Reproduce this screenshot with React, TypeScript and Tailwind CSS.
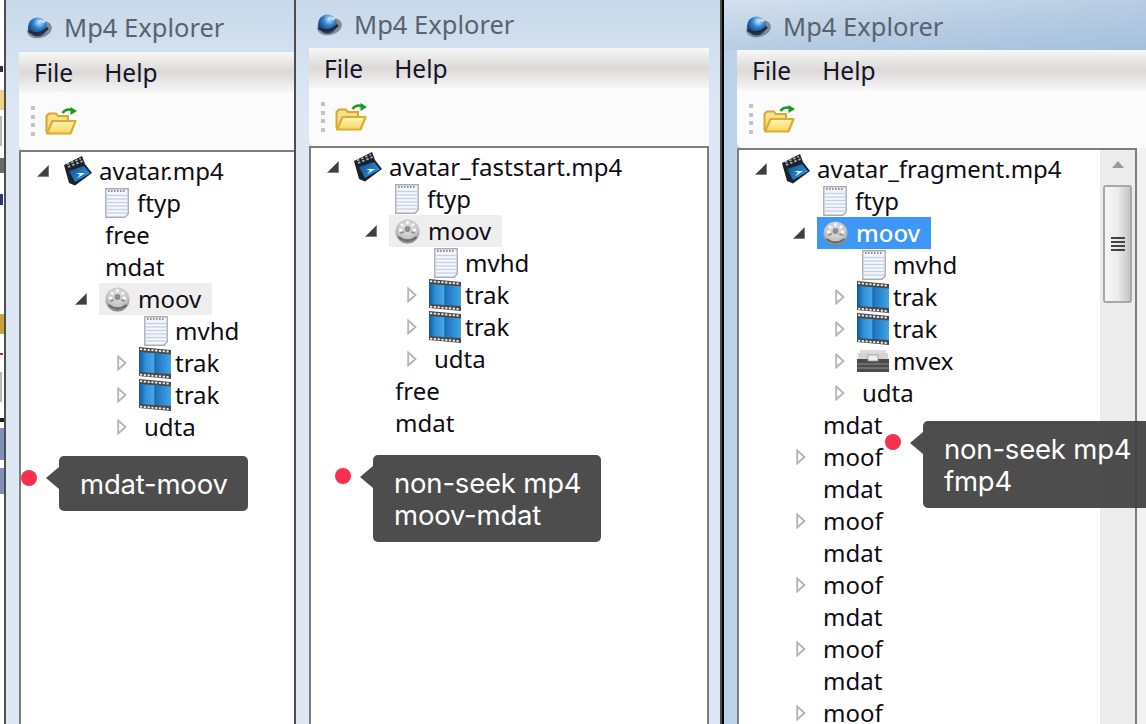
import React from "react";

const Open = () => (
  <svg width="14" height="14" viewBox="0 0 14 14" className="block">
    <path d="M12.5 1.5V12.5H1.5Z" fill="#3f3f3f" stroke="#777" strokeWidth="0.8" />
  </svg>
);
const Closed = () => (
  <svg width="10" height="16" viewBox="0 0 10 16" className="block">
    <path d="M1.2 1.5L8.5 8L1.2 14.5Z" fill="#fff" stroke="#b4b4b4" strokeWidth="1.8" />
  </svg>
);
const Doc = () => (
  <svg width="24" height="30" viewBox="0 0 24 30" className="block shrink-0">
    <path d="M0.8 0.8H23.2V26L20 29.2H0.8Z" fill="#f4f6fb" stroke="#a9adb3" strokeWidth="1.4" />
    <path d="M3 3H21" stroke="#8d9198" strokeWidth="1.8" strokeDasharray="1.6 1.4" />
    {[7.5, 11, 14.5, 18, 21.5, 25].map((y) => (
      <path key={y} d={`M2 ${y}H22`} stroke="#c3cfe2" strokeWidth="1.2" />
    ))}
  </svg>
);
const Film = () => (
  <svg width="32" height="32" viewBox="0 0 32 32" className="block shrink-0 -ml-[5px]">
    <defs>
      <linearGradient id="filmBlue" x1="0" x2="1" y1="0" y2="0">
        <stop offset="0" stopColor="#0e5a9f" />
        <stop offset="0.2" stopColor="#2f8fd8" />
        <stop offset="0.48" stopColor="#4aa8e8" />
        <stop offset="0.52" stopColor="#1c74bd" />
        <stop offset="0.8" stopColor="#2f90d8" />
        <stop offset="1" stopColor="#46a5e6" />
      </linearGradient>
    </defs>
    <path d="M0 0L32 3V32L0 29Z" fill="#4a4a4a" />
    <path d="M1 2.2L31 4.8" stroke="#f2f2f2" strokeWidth="1.8" strokeDasharray="2.2 1.6" />
    <path d="M1 27.6L31 30.2" stroke="#f2f2f2" strokeWidth="1.8" strokeDasharray="2.2 1.6" />
    <path d="M0 5L32 7.5V27L0 25Z" fill="url(#filmBlue)" />
    <path d="M16 6.5V26" stroke="#0f5c9c" strokeWidth="1" />
  </svg>
);
const Gear = () => (
  <svg width="25" height="25" viewBox="0 0 25 25" className="block shrink-0 blur-[0.5px]">
    <defs>
      <radialGradient id="gearG" cx="0.5" cy="0.35" r="0.65">
        <stop offset="0" stopColor="#e4e4e4" />
        <stop offset="0.7" stopColor="#c2c2c2" />
        <stop offset="1" stopColor="#7e7e7e" />
      </radialGradient>
    </defs>
    <circle cx="12.5" cy="12.5" r="12" fill="url(#gearG)" />
    <circle cx="12.5" cy="10" r="3" fill="#8c8c8c" />
    <path d="M6 5L8 7M19 5L17 7M4 11H7M21 11H18M12.5 2V5" stroke="#fbfbfb" strokeWidth="2.4" />
    <path d="M5 14L9 13M20 14L16 13" stroke="#8d8d8d" strokeWidth="1.6" />
    <path d="M3.5 18Q12.5 25 21.5 18" stroke="#6b6b6b" strokeWidth="2.2" fill="none" />
  </svg>
);
const Clapper = () => (
  <svg width="30" height="30" viewBox="0 0 30 30" className="block shrink-0 blur-[0.3px]">
    <defs>
      <linearGradient id="clapBlue" x1="0" x2="1" y1="0" y2="0.6">
        <stop offset="0" stopColor="#0e4c8a" />
        <stop offset="1" stopColor="#2f93da" />
      </linearGradient>
    </defs>
    <path d="M1 9L19 0L22 8L29 17L12 29.5L6 27Z" fill="#1b222c" />
    <path d="M4 8.5L18 2.5M5 11L19.5 5" stroke="#aab1ba" strokeWidth="1.8" strokeDasharray="2.5 2" />
    <path d="M6 15L21 10L27 17.5L12 26Z" fill="url(#clapBlue)" />
    <path d="M13 17L22 17L14 22.5L17 18.5Z" fill="#eaf5ff" />
  </svg>
);
const Box = () => (
  <svg width="32" height="24" viewBox="0 0 32 24" className="block shrink-0 -ml-[5px]">
    <rect x="3" y="1" width="26" height="3" fill="#dcdcdc" />
    <rect x="1" y="4" width="30" height="7" fill="#d4d4d4" />
    <rect x="0" y="10" width="32" height="13" fill="#4b4b4b" />
    <path d="M0 15H32M0 19H32" stroke="#7a7a7a" strokeWidth="1.4" />
    <rect x="11" y="6" width="10" height="6" fill="#efefef" stroke="#9a9a9a" strokeWidth="0.8" />
  </svg>
);
const Globe = () => (
  <svg width="26" height="22" viewBox="0 0 26 22" className="block blur-[0.5px]">
    <defs>
      <radialGradient id="globeG" cx="0.6" cy="0.25" r="0.7">
        <stop offset="0" stopColor="#cfe8fb" />
        <stop offset="0.45" stopColor="#2f86d2" />
        <stop offset="1" stopColor="#16366e" />
      </radialGradient>
    </defs>
    <ellipse cx="13.5" cy="12.5" rx="12.5" ry="8.5" fill="#70757f" opacity="0.8" transform="rotate(-14 13.5 12.5)" />
    <circle cx="11.5" cy="10" r="9.5" fill="url(#globeG)" />
    <path d="M2.5 14Q12 20 22 11" stroke="#232a38" strokeWidth="2.6" fill="none" />
    <path d="M13 3L20 3.5L18 6.5Z" fill="#e6f2fb" opacity="0.8" />
  </svg>
);
const Folder = () => (
  <svg width="32" height="28" viewBox="0 0 32 28" className="block">
    <defs>
      <linearGradient id="folderG" x1="0" x2="0" y1="0" y2="1">
        <stop offset="0" stopColor="#fff5b8" />
        <stop offset="1" stopColor="#f8d65e" />
      </linearGradient>
    </defs>
    <path d="M1.5 25V9L4 6.5H11L13 9H23V13" fill="#f8de88" stroke="#d6a92c" strokeWidth="2" />
    <path d="M2 26.5L7.5 14H30.5L25.5 26.5Z" fill="url(#folderG)" stroke="#d9ad30" strokeWidth="2.2" strokeLinejoin="round" />
    <path d="M17.5 6Q21 1 27 3" stroke="#1f9a23" strokeWidth="2.4" fill="none" />
    <path d="M25.5 0L32 4L25.5 8Z" fill="#179a1e" />
  </svg>
);

type Kind = "doc" | "film" | "gear" | "clap" | "box" | "none";
const icons: Record<Kind, React.ReactNode> = {
  doc: <Doc />,
  film: <Film />,
  gear: <Gear />,
  clap: <Clapper />,
  box: <Box />,
  none: null,
};

type RowData = { level: 0 | 1 | 2; label: string; icon: Kind; arrow?: "open" | "closed"; hi?: "soft" | "blue" };

function Row({ level, label, icon, arrow, hi }: RowData) {
  const pad = level === 0 ? "pl-[15px]" : level === 1 ? "pl-[53px]" : "pl-[92px]";
  const slot = level === 0 ? "w-[27px]" : level === 1 ? "w-[25px]" : "w-[31px]";
  const body = level === 1 ? (hi ? "pl-[6px] pr-[11px]" : "px-[6px]") : "";
  const gap = level === 0 ? "gap-[6px]" : level === 1 ? "gap-[8px]" : icon === "doc" ? "gap-[7px]" : "gap-[4px]";
  const bg = hi === "soft" ? "bg-[#eeeeee] text-[#100c14]" : hi === "blue" ? "bg-[#3c97f7] text-white font-medium" : "text-[#100c14]";
  return (
    <div className={`flex h-8 items-center ${pad}`}>
      <div className={`flex items-center shrink-0 ${slot} ${arrow === "closed" ? "pl-[4px]" : ""}`}>
        {arrow === "open" && <Open />}
        {arrow === "closed" && <Closed />}
      </div>
      <div className={`flex h-8 items-center ${gap} ${body} ${bg}`}>
        {icons[icon]}
        <span className="leading-8">{label}</span>
      </div>
    </div>
  );
}

function Chrome({ title, tree, titleCls }: { title: string; tree: React.ReactNode; titleCls: string }) {
  return (
    <>
      <div className={`flex items-center gap-[12px] -ml-[13px] shrink-0 ${titleCls}`}>
        <Globe />
        <span className="text-[25.5px] leading-none text-[#59636f]">{title}</span>
      </div>
      <div className="h-10 shrink-0 flex items-center gap-[31px] pl-[15px] pt-[2px] text-[24.5px] text-[#14142a] bg-gradient-to-b from-[#f7f7f7] via-[#dcd9d7] to-[#f6f6f6]">
        <span>File</span>
        <span>Help</span>
      </div>
      <div className="h-[58px] shrink-0 flex items-center gap-[10px] pl-[12px] bg-[#fbfbfb] rounded-bl-md">
        <div className="flex flex-col gap-[4.6px]">
          <div className="h-[4px] w-[4px] bg-[#c4c4c4]" />
          <div className="h-[4px] w-[4px] bg-[#c4c4c4]" />
          <div className="h-[4px] w-[4px] bg-[#c4c4c4]" />
          <div className="h-[4px] w-[4px] bg-[#c4c4c4]" />
        </div>
        <Folder />
      </div>
      {tree}
    </>
  );
}

function Bubble({ lines, className }: { lines: string[]; className: string }) {
  return (
    <div className={`absolute ${className} rounded-[5px] bg-[rgba(62,62,62,0.92)] pl-[21px] py-[12px] text-[27.5px] leading-[32px] text-white [font-family:Inter,'Liberation_Sans',sans-serif]`}>
      <div className="absolute -left-[13px] top-[11px] h-0 w-0 border-y-[11px] border-r-[13px] border-y-transparent border-r-[rgba(62,62,62,0.92)]" />
      {lines.map((l) => (
        <div key={l} className="whitespace-nowrap tracking-[-0.2px]">{l}</div>
      ))}
    </div>
  );
}

const Dot = ({ className }: { className: string }) => (
  <div className={`absolute ${className} h-4 w-4 rounded-full bg-[#f7304c]`} />
);

const Flecks = () => (
  <div className="w-[4px] shrink-0 flex flex-col">
    <div className="h-[66px]" />
    <div className="h-[6px] w-[3px] bg-[#3b2a5a]" />
    <div className="h-[18px]" />
    <div className="h-[20px] bg-[#efd28a]" />
    <div className="h-[6px]" />
    <div className="h-[30px] w-[2px] bg-[#b9b9b9]" />
    <div className="h-[12px]" />
    <div className="h-[15px] bg-[#6a6a6a]" />
    <div className="h-[21px]" />
    <div className="h-[11px] w-[3px] bg-[#2c3a70]" />
    <div className="h-[109px]" />
    <div className="h-[20px] bg-[#c9a23c]" />
    <div className="h-[19px]" />
    <div className="h-[2px] w-[3px] bg-[#a03040]" />
    <div className="h-[17px]" />
    <div className="h-[30px] w-[2px] bg-[#b9b9b9]" />
    <div className="h-[16px]" />
    <div className="h-[4px] bg-[#222222]" />
    <div className="h-[6px]" />
    <div className="h-[32px] bg-[#8090b8]" />
    <div className="h-[8px]" />
    <div className="h-[26px] bg-[#8090b8]" />
  </div>
);

const tree1: RowData[] = [
  { level: 0, label: "avatar.mp4", icon: "clap", arrow: "open" },
  { level: 1, label: "ftyp", icon: "doc" },
  { level: 1, label: "free", icon: "none" },
  { level: 1, label: "mdat", icon: "none" },
  { level: 1, label: "moov", icon: "gear", arrow: "open", hi: "soft" },
  { level: 2, label: "mvhd", icon: "doc" },
  { level: 2, label: "trak", icon: "film", arrow: "closed" },
  { level: 2, label: "trak", icon: "film", arrow: "closed" },
  { level: 2, label: "udta", icon: "none", arrow: "closed" },
];
const tree2: RowData[] = [
  { level: 0, label: "avatar_faststart.mp4", icon: "clap", arrow: "open" },
  { level: 1, label: "ftyp", icon: "doc" },
  { level: 1, label: "moov", icon: "gear", arrow: "open", hi: "soft" },
  { level: 2, label: "mvhd", icon: "doc" },
  { level: 2, label: "trak", icon: "film", arrow: "closed" },
  { level: 2, label: "trak", icon: "film", arrow: "closed" },
  { level: 2, label: "udta", icon: "none", arrow: "closed" },
  { level: 1, label: "free", icon: "none" },
  { level: 1, label: "mdat", icon: "none" },
];
const tree3: RowData[] = [
  { level: 0, label: "avatar_fragment.mp4", icon: "clap", arrow: "open" },
  { level: 1, label: "ftyp", icon: "doc" },
  { level: 1, label: "moov", icon: "gear", arrow: "open", hi: "blue" },
  { level: 2, label: "mvhd", icon: "doc" },
  { level: 2, label: "trak", icon: "film", arrow: "closed" },
  { level: 2, label: "trak", icon: "film", arrow: "closed" },
  { level: 2, label: "mvex", icon: "box", arrow: "closed" },
  { level: 2, label: "udta", icon: "none", arrow: "closed" },
  { level: 1, label: "mdat", icon: "none" },
  { level: 1, label: "moof", icon: "none", arrow: "closed" },
  { level: 1, label: "mdat", icon: "none" },
  { level: 1, label: "moof", icon: "none", arrow: "closed" },
  { level: 1, label: "mdat", icon: "none" },
  { level: 1, label: "moof", icon: "none", arrow: "closed" },
  { level: 1, label: "mdat", icon: "none" },
  { level: 1, label: "moof", icon: "none", arrow: "closed" },
  { level: 1, label: "mdat", icon: "none" },
  { level: 1, label: "moof", icon: "none", arrow: "closed" },
];

const Rows = ({ rows }: { rows: RowData[] }) => (
  <div className="flex-1 min-w-0 pt-[3px] overflow-hidden">
    {rows.map((r, i) => (
      <Row key={i} {...r} />
    ))}
  </div>
);

export default function App() {
  return (
    <div className="flex h-[724px] w-[1146px] overflow-hidden bg-white text-[24px] [font-family:'Noto_Sans','Open_Sans',sans-serif]">
      <div className="relative flex w-[296px] shrink-0">
        <Flecks />
        <div className="flex min-w-0 flex-1 h-full flex-col border-x-[2px] border-[#4d4d4d] pl-[13px] bg-gradient-to-b from-[#c9d9ea] to-[#dde8f4] to-[15%]">
          <Chrome
            title="Mp4 Explorer"
            titleCls="h-[52px] pt-[3px] pl-[20px]"
            tree={
              <div className="flex-1 min-h-0 bg-white border-l-[2px] border-t-[2px] border-[#7d7d7d]">
                <Rows rows={tree1} />
              </div>
            }
          />
        </div>
        <Dot className="left-[21px] top-[470px]" />
        <Bubble lines={["mdat-moov"]} className="left-[59px] top-[456px] w-[189px] h-[55px]" />
      </div>

      <div className="relative w-[426px] shrink-0">
        <div className="flex h-full flex-col border-r-[2px] border-[#4d4d4d] pl-[13px] pr-[11px] bg-gradient-to-b from-[#c9d9ea] to-[#dde8f4] to-[15%]">
          <Chrome
            title="Mp4 Explorer"
            titleCls="h-[48px] pt-[1px] pl-[20px]"
            tree={
              <div className="flex-1 min-h-0 bg-white border-x-[2px] border-t-[2px] border-[#7d7d7d]">
                <Rows rows={tree2} />
              </div>
            }
          />
        </div>
        <Dot className="left-[39px] top-[468px]" />
        <Bubble lines={["non-seek mp4", "moov-mdat"]} className="left-[77px] top-[455px] w-[228px] h-[87px]" />
      </div>

      <div className="relative w-[424px] shrink-0">
        <div className="flex h-full flex-col border-l-[2px] border-black pl-[13px] bg-[#bcd2ea]">
          <Chrome
            title="Mp4 Explorer"
            titleCls="h-[50px] pt-[3px] pl-[21px] bg-gradient-to-br from-[#d4e0ee] via-[#b8cde3] to-[#a4c0de]"
            tree={
              <div className="flex flex-1 min-h-0 bg-[#f2f2f2]">
                <div className="flex flex-1 min-w-0 mr-[9px] bg-white border-x-[2px] border-t-[2px] border-[#7d7d7d]">
                  <Rows rows={tree3} />
                  <div className="w-[35px] shrink-0 bg-[#ececec] flex flex-col items-center">
                    <svg width="14" height="10" viewBox="0 0 14 10" className="mt-[10px] block">
                      <path d="M7 1L13 8H1Z" fill="#9a9a9a" />
                    </svg>
                    <div className="mt-[15px] h-[118px] w-[29px] rounded-[3px] border-[2px] border-[#a8a8a8] bg-gradient-to-r from-[#f8f8f8] via-[#ececec] to-[#c4c4c4] flex flex-col items-center justify-center gap-[2px]">
                      <div className="h-[2px] w-[14px] bg-[#444]" />
                      <div className="h-[2px] w-[14px] bg-[#444]" />
                      <div className="h-[2px] w-[14px] bg-[#444]" />
                      <div className="h-[2px] w-[14px] bg-[#444]" />
                    </div>
                  </div>
                </div>
              </div>
            }
          />
        </div>
        <Dot className="left-[163px] top-[434px]" />
        <Bubble lines={["non-seek mp4", "fmp4"]} className="left-[201px] top-[421px] w-[240px] h-[87px]" />
      </div>
    </div>
  );
}
